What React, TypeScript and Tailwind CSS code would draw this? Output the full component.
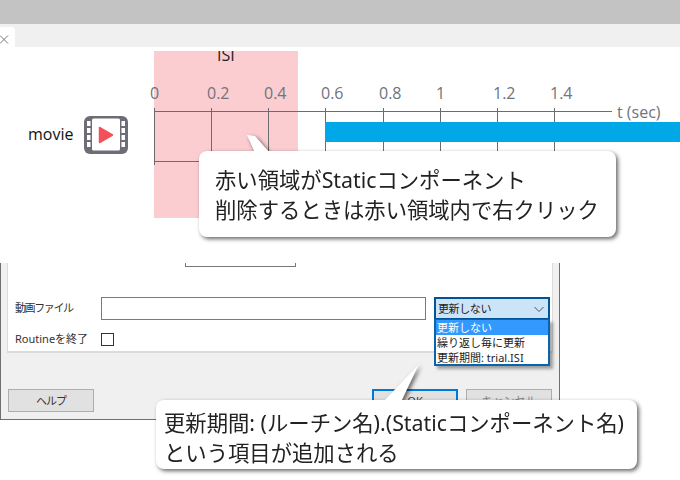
const ticks = [
  { x: 154, label: "0" },
  { x: 211, label: "0.2" },
  { x: 268, label: "0.4" },
  { x: 325, label: "0.6" },
  { x: 383, label: "0.8" },
  { x: 440, label: "1" },
  { x: 497, label: "1.2" },
  { x: 554, label: "1.4" },
];

const sans = "font-['Open_Sans','Noto_Sans_CJK_JP',sans-serif]";
const jp = "font-['Noto_Sans','Noto_Sans_CJK_JP',sans-serif]";

function MovieIcon() {
  return (
    <svg width="44" height="38" viewBox="0 0 44 38" className="absolute left-[84px] top-[69px]">
      <rect x="0" y="0" width="44" height="38" rx="6" fill="#6d6e75" />
      <rect x="8" y="2.5" width="28" height="32" rx="1.5" fill="#fff" />
      {[5, 12, 19, 26].map((y) => (
        <g key={y}>
          <rect x="3" y={y} width="3.5" height="5" fill="#fff" />
          <rect x="37.5" y={y} width="3.5" height="5" fill="#fff" />
        </g>
      ))}
      <path d="M15.5 11.5 L28.5 19 L15.5 26.5 Z" fill="#f4505b" stroke="#f4505b" strokeWidth="1.5" strokeLinejoin="round" />
    </svg>
  );
}

function Timeline() {
  return (
    <section className="relative h-[216px] bg-white overflow-hidden">
      <div className="absolute left-[154px] top-[4px] w-[144px] h-[167px] bg-[#fbcdd0] overflow-hidden">
        <div className={`absolute left-[63px] top-[-7px] text-[16px] leading-[22px] text-[#222] ${sans}`}>ISI</div>
      </div>
      <div className={`absolute left-[28px] top-[76px] text-[16px] leading-[22px] text-[#111] ${sans}`}>movie</div>
      <MovieIcon />
      <svg width="680" height="216" className="absolute left-0 top-0">
        <line x1="154" y1="64.5" x2="612" y2="64.5" stroke="#6b6b70" />
        <line x1="154" y1="114.5" x2="330" y2="114.5" stroke="#6b6b70" />
        {ticks.map((t) => (
          <line key={t.x} x1={t.x + 0.5} y1="61" x2={t.x + 0.5} y2={t.x === 154 ? 118 : 114} stroke="#6b6b70" />
        ))}
      </svg>
      <div className="absolute left-[325px] top-[75px] right-0 h-[20px] bg-[#00a8e8]" />
      {ticks.map((t) => (
        <div
          key={t.label}
          className={`absolute top-[35px] text-[16px] leading-[22px] text-[#6e7480] ${sans}`}
          style={{ left: t.x - 4 }}
        >
          {t.label}
        </div>
      ))}
      <div className={`absolute left-[617px] top-[54px] text-[16px] leading-[22px] text-[#6e7480] ${sans}`}>t (sec)</div>
    </section>
  );
}

function Bubble({
  className,
  tail,
  tailBox,
  children,
}: {
  className: string;
  tail: string;
  tailBox: string;
  children: React.ReactNode;
}) {
  return (
    <div className={`absolute drop-shadow-[2px_2px_2px_rgba(0,0,0,0.6)] ${className}`}>
      <svg width="60" height="42" viewBox="0 0 60 42" className={`absolute ${tailBox}`}>
        <polygon points={tail} fill="#fff" />
      </svg>
      <div className={`relative h-full rounded-[8px] bg-white text-[#222] ${jp}`}>{children}</div>
    </div>
  );
}

function Dialog() {
  return (
    <section className="w-[560px] h-[157px] bg-[#f0f0f0] border-l border-r border-b border-[#6f6f6f] flex flex-col px-[6px]">
      <div className={`h-[90px] bg-white border-b-2 border-x border-[#dcdcdc] flex flex-col pl-[7px] text-[11px] text-[#333] ${jp}`}>
        <div className="ml-[170px] w-[111px] h-[4px] border-x border-b border-[#777]" />
        <div className="mt-[30px] flex items-start">
          <div className="w-[86px] h-[23px] leading-[22px] tracking-[-1.4px]">動画ファイル</div>
          <div className="w-[325px] h-[23px] border border-[#7a7a7a] bg-white" />
          <div className="ml-[8px] w-[116px] h-[23px] border-2 border-[#005499] bg-[#cce4f7] flex items-center justify-between pl-[2px] pr-[3px] leading-[19px] tracking-[-0.4px] text-[#222]">
            <span>更新しない</span>
            <svg width="12" height="12" viewBox="0 0 12 12">
              <path d="M1.5 4 L6 8.5 L10.5 4" fill="none" stroke="#555" strokeWidth="1" />
            </svg>
          </div>
        </div>
        <div className="mt-[9px] flex items-center">
          <div className="w-[86px] leading-[20px]">Routineを終了</div>
          <div className="w-[13px] h-[13px] border border-[#333] bg-white" />
        </div>
      </div>
      <div className={`mt-[36px] flex items-start gap-[8px] text-[11px] text-[#333] ${jp}`}>
        <div className="w-[86px] h-[23px] ml-[1px] mr-[270px] border border-[#adadad] bg-[#e1e1e1] text-center leading-[21px] tracking-[-1px]">ヘルプ</div>
        <div className="w-[86px] h-[23px] border-2 border-[#0078d7] bg-[#e1e1e1] text-center leading-[19px]">OK</div>
        <div className="w-[86px] h-[23px] border border-[#adadad] bg-[#e1e1e1] text-center leading-[21px] text-[#888]">キャンセル</div>
      </div>
    </section>
  );
}

export default function App() {
  return (
    <div className="relative w-[680px] h-[480px] bg-white overflow-hidden">
      <div className="h-[24px] bg-[#c3c3c3]" />
      <div className="h-[23px] bg-[#f0f0f0] flex items-end">
        <div className="w-[15px] h-[20px] bg-white rounded-tr-[4px] flex items-center">
          <svg width="9" height="9" viewBox="0 0 9 9" className="mt-[4px]">
            <path d="M0 .5 L8 8.5 M8 .5 L0 8.5" stroke="#777" strokeWidth="1" />
          </svg>
        </div>
      </div>
      <Timeline />
      <Dialog />

      <div className={`absolute left-[434px] top-[319px] w-[116px] h-[47px] border-2 border-t border-[#0a64ad] bg-white text-[11px] leading-[15px] text-[#222] shadow-[3px_3px_3px_rgba(0,0,0,0.35)] ${jp}`}>
        <div className="bg-[#3399ff] text-white pl-[1px] h-[15px]">更新しない</div>
        <div className="pl-[1px] h-[15px]">繰り返し毎に更新</div>
        <div className="pl-[1px] h-[15px]">更新期間: trial.ISI</div>
      </div>

      <Bubble
        className="left-[199px] top-[151px] w-[417px] h-[86px]"
        tailBox="left-[40px] top-[-16px]"
        tail="8,0 16,1 31,18 16,18"
      >
        <div className="pl-[16px] pt-[14px] text-[21.33px] leading-[30px]">
          <div>赤い領域がStaticコンポーネント</div>
          <div>削除するときは赤い領域内で右クリック</div>
        </div>
      </Bubble>

      <Bubble
        className="left-[156px] top-[400px] w-[481px] h-[69px]"
        tailBox="left-[220px] top-[-38px]"
        tail="43,2 7,40 25,40"
      >
        <div className="pl-[8px] pt-[8px] text-[21.33px] leading-[30px]">
          <div>更新期間: (ルーチン名).(Staticコンポーネント名)</div>
          <div>という項目が追加される</div>
        </div>
      </Bubble>
    </div>
  );
}
